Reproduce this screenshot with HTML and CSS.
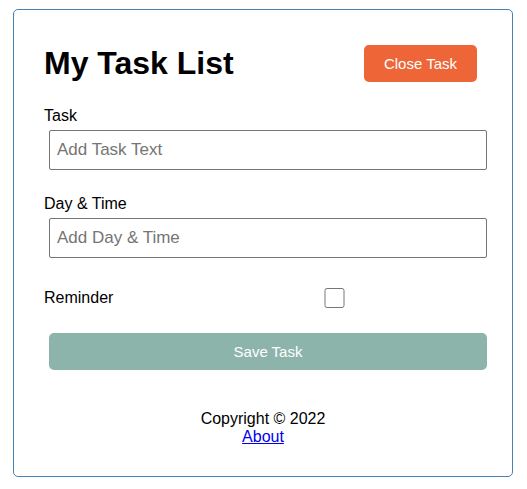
FILE: index.html
```html
<!DOCTYPE html>
<html>
<head>
<meta charset="utf-8">
<link rel="stylesheet" href="styles.css">
</head>
<body>
<div class="container">
  <header class="header">
    <h1>My Task List</h1>
    <button class="btn btn-close">Close Task</button>
  </header>
  <form class="add-form">
    <div class="form-control">
      <label>Task</label>
      <input type="text" placeholder="Add Task Text">
    </div>
    <div class="form-control">
      <label>Day &amp; Time</label>
      <input type="text" placeholder="Add Day &amp; Time">
    </div>
    <div class="form-control form-control-check">
      <label>Reminder</label>
      <input type="checkbox">
    </div>
    <input type="submit" value="Save Task" class="btn btn-block">
  </form>
  <footer class="footer">
    <p>Copyright &copy; 2022</p>
    <a href="#">About</a>
  </footer>
</div>
</body>
</html>
```
FILE: styles.css
```css
* {
  box-sizing: border-box;
  margin: 0;
  padding: 0;
}
body {
  font-family: "Liberation Sans", Arial, sans-serif;
  font-size: 16px;
  background: #fff;
  color: #000;
  margin-right: 1px;
}
.container {
  max-width: 500px;
  margin: 9px auto 30px;
  overflow: auto;
  min-height: 300px;
  border: 1px solid steelblue;
  padding: 30px;
  border-radius: 5px;
}
.header {
  display: flex;
  justify-content: space-between;
  align-items: center;
  margin-bottom: 20px;
}
.header h1 {
  font-size: 32px;
  font-weight: bold;
}
.btn {
  display: inline-block;
  background: #000;
  color: #fff;
  border: none;
  padding: 10px 20px;
  margin: 5px;
  border-radius: 5px;
  cursor: pointer;
  font-size: 15px;
  font-family: inherit;
}
.btn-close {
  background: #ee6537;
}
.btn-block {
  display: block;
  width: 100%;
  background: #8db4ab;
}
.add-form {
  margin-bottom: 40px;
}
.form-control {
  margin: 20px 0;
}
.form-control label {
  display: block;
}
.form-control input {
  width: 100%;
  height: 40px;
  margin: 5px;
  padding: 3px 7px;
  font-size: 17px;
  font-family: inherit;
  border: 1px solid #767676;
  border-radius: 2px;
}
.form-control input::placeholder {
  color: #757575;
}
.form-control-check {
  display: flex;
  align-items: center;
  justify-content: space-between;
}
.form-control-check label {
  flex: 1;
}
.form-control-check input {
  flex: 2;
  height: 20px;
}
.footer {
  margin-top: 30px;
  text-align: center;
}
.footer a {
  color: #0000ee;
}
```
